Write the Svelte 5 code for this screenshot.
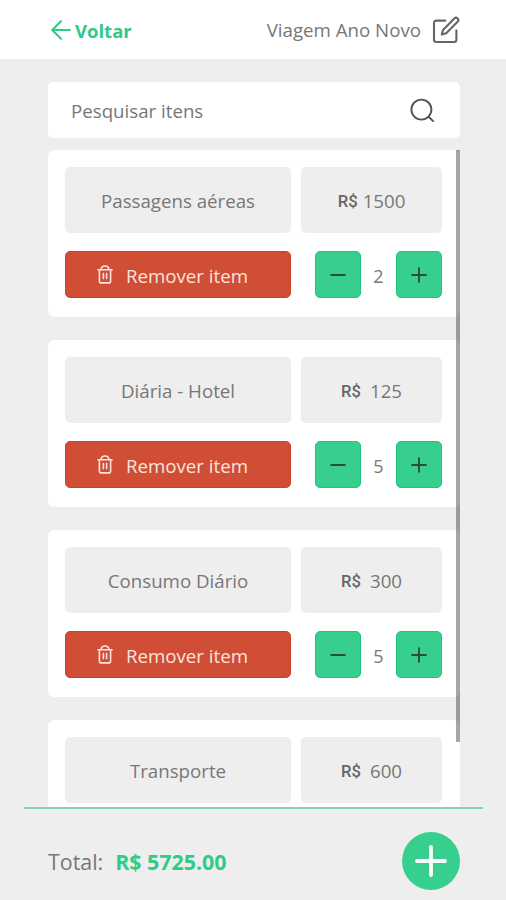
<script lang="ts">
  interface Item {
    id: number;
    name: string;
    price: number;
    quantity: number;
  }

  let search = $state('');

  let items = $state<Item[]>([
    { id: 1, name: 'Passagens aéreas', price: 1500, quantity: 2 },
    { id: 2, name: 'Diária - Hotel', price: 125, quantity: 5 },
    { id: 3, name: 'Consumo Diário', price: 300, quantity: 5 },
    { id: 4, name: 'Transporte', price: 600, quantity: 1 }
  ]);

  let filteredItems = $derived(
    items.filter((item) => item.name.toLowerCase().includes(search.trim().toLowerCase()))
  );

  let total = $derived(items.reduce((sum, item) => sum + item.price * item.quantity, 0));

  function changeQuantity(item: Item, amount: number) {
    item.quantity = Math.max(1, item.quantity + amount);
  }

  function removeItem(id: number) {
    items = items.filter((item) => item.id !== id);
  }
</script>

<div class="screen">
  <header>
    <button class="back">
      <svg width="20" height="20" viewBox="0 0 20 20" fill="none" stroke="currentColor" stroke-width="2" stroke-linecap="round" stroke-linejoin="round">
        <path d="M18.8 10H1.6M10 1.2L1.2 10l8.8 8.8" />
      </svg>
      <span>Voltar</span>
    </button>
    <div class="trip">
      <span>Viagem Ano Novo</span>
      <svg width="28" height="28" viewBox="0 0 28 28" fill="none" stroke="currentColor" stroke-width="2.1" stroke-linecap="round" stroke-linejoin="round">
        <path d="M13.3 4.6H4.2A2.2 2.2 0 0 0 2 6.8v17a2.2 2.2 0 0 0 2.2 2.2h18a2.2 2.2 0 0 0 2.2-2.2v-9.4" />
        <path d="M22.3 2.4a2.3 2.3 0 0 1 3.3 3.3L14.2 17.2l-4.4 1.4 1.2-4.6z" />
      </svg>
    </div>
  </header>

  <main>
    <div class="search">
      <input type="text" placeholder="Pesquisar itens" bind:value={search} />
      <svg width="26" height="26" viewBox="0 0 26 26" fill="none" stroke="currentColor" stroke-width="1.9" stroke-linecap="round">
        <circle cx="11.4" cy="12.6" r="10" />
        <path d="M18.6 19.8l4.5 4.3" />
      </svg>
    </div>

    <div class="list">
      {#each filteredItems as item (item.id)}
        <div class="card">
          <div class="field">{item.name}</div>
          <div class="field price" class:short={item.price < 1000}>
            <span class="currency">R$</span>
            <span>{item.price}</span>
          </div>
          <button class="remove" onclick={() => removeItem(item.id)}>
            <svg width="16" height="19" viewBox="0 0 16 19" fill="none" stroke="currentColor" stroke-width="1.6" stroke-linecap="round" stroke-linejoin="round">
              <path d="M.9 4.8h14.2M3.9 4.6C4.3 2.2 5.8 1 8 1s3.7 1.2 4.1 3.6" />
              <path d="M2.4 5v10.9c0 1.2.8 2 2 2h7.2c1.2 0 2-.8 2-2V5M6.4 8.6v5M9.6 8.6v5" />
            </svg>
            <span>Remover item</span>
          </button>
          <div class="stepper">
            <button aria-label="Diminuir" onclick={() => changeQuantity(item, -1)}>
              <svg width="16" height="16" viewBox="0 0 16 16" stroke="currentColor" stroke-width="2">
                <path d="M.4 8h15.2" />
              </svg>
            </button>
            <span>{item.quantity}</span>
            <button aria-label="Aumentar" onclick={() => changeQuantity(item, 1)}>
              <svg width="16" height="16" viewBox="0 0 16 16" stroke="currentColor" stroke-width="1.9">
                <path d="M.4 8h15.2M8 .4v15.2" />
              </svg>
            </button>
          </div>
        </div>
      {/each}
      <div class="thumb"></div>
    </div>
  </main>

  <footer>
    <div class="total">
      <span>Total:</span>
      <strong>R$ {total.toFixed(2)}</strong>
    </div>
    <button class="add" aria-label="Adicionar item">
      <svg width="32" height="32" viewBox="0 0 32 32" stroke="currentColor" stroke-width="3.8" stroke-linecap="round">
        <path d="M2 16h28M16 2v28" />
      </svg>
    </button>
  </footer>
</div>

<style>
  :global(body) {
    margin: 0;
    background: #eee;
  }

  .screen {
    display: flex;
    flex-direction: column;
    height: 900px;
    overflow: hidden;
    background: #eee;
    color: #777;
    font-family: 'Open Sans', 'Noto Sans', sans-serif;
    font-size: 18.7px;
  }

  button {
    display: flex;
    align-items: center;
    justify-content: center;
    box-sizing: border-box;
    padding: 0;
    border: none;
    background: none;
    font: inherit;
    cursor: pointer;
  }

  svg {
    display: block;
    flex-shrink: 0;
  }

  header {
    display: flex;
    align-items: center;
    justify-content: space-between;
    box-sizing: border-box;
    height: 59px;
    padding: 1px 46px 0 51px;
    background: #fff;
  }

  .back {
    gap: 4px;
    color: #2fcb87;
    font-size: 18.5px;
    font-weight: 700;
  }

  .trip {
    display: flex;
    align-items: center;
    gap: 11px;
  }

  .trip span {
    padding-bottom: 2px;
  }

  .trip svg {
    color: #666;
  }

  main {
    display: flex;
    flex: 1;
    flex-direction: column;
    gap: 12px;
    min-height: 0;
    padding: 23px 46px 0 48px;
  }

  .search {
    display: flex;
    flex-shrink: 0;
    align-items: center;
    justify-content: space-between;
    box-sizing: border-box;
    height: 56px;
    padding: 0 24px 0 23px;
    border-radius: 5px;
    background: #fff;
    color: #555;
  }

  .search input {
    flex: 1;
    min-width: 0;
    padding: 0;
    border: none;
    outline: none;
    background: none;
    color: #777;
    font: inherit;
  }

  .search input::placeholder {
    color: #777;
    opacity: 1;
  }

  .list {
    position: relative;
    display: flex;
    flex: 1;
    flex-direction: column;
    gap: 23px;
    min-height: 0;
    overflow: hidden;
  }

  .card {
    display: grid;
    flex-shrink: 0;
    grid-template-columns: 226px 141px;
    grid-template-rows: 66px 47px;
    gap: 18px 10px;
    box-sizing: border-box;
    height: 167px;
    padding: 17px;
    border-radius: 6px;
    background: #fff;
  }

  .field {
    display: flex;
    align-items: center;
    justify-content: center;
    border-radius: 5px;
    background: #eee;
  }

  .price {
    gap: 5px;
  }

  .price.short {
    gap: 9px;
  }

  .currency {
    padding-top: 2px;
    color: #666;
    font-family: Roboto, sans-serif;
    font-size: 16.7px;
    font-weight: 500;
  }

  .remove {
    gap: 13px;
    padding-right: 11px;
    border: 1px solid #c9432a;
    border-radius: 5px;
    background: #cf4e35;
    color: #fbe3dd;
  }

  .remove span {
    padding-top: 2px;
  }

  .stepper {
    display: flex;
    align-items: center;
    justify-content: space-between;
    padding-left: 14px;
    font-size: 18px;
  }

  .stepper span {
    padding-top: 2px;
  }

  .stepper button {
    width: 46px;
    height: 47px;
    border: 1px solid #22c47b;
    border-radius: 5px;
    background: #37cf8d;
    color: #2c4a3d;
  }

  .thumb {
    position: absolute;
    top: 0;
    right: 0;
    width: 4px;
    height: 592px;
    background: rgba(0, 0, 0, 0.35);
  }

  footer {
    display: flex;
    align-items: center;
    justify-content: space-between;
    box-sizing: border-box;
    height: 93px;
    margin: 0 23px 0 24px;
    padding: 13px 23px 0 24px;
    border-top: 2px solid #7fd5ae;
  }

  .total {
    display: flex;
    gap: 12px;
    font-size: 21.4px;
  }

  .total strong {
    color: #2fcb87;
  }

  .add {
    width: 58px;
    height: 58px;
    border-radius: 50%;
    background: #37cf8d;
    color: #fff;
  }
</style>
